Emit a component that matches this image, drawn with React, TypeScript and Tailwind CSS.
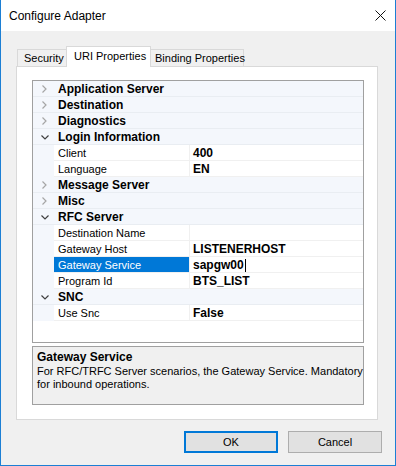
import React from 'react';

type Row =
  | { kind: 'cat'; label: string; open: boolean }
  | { kind: 'prop'; label: string; value: string; selected?: boolean };

const rows: Row[] = [
  { kind: 'cat', label: 'Application Server', open: false },
  { kind: 'cat', label: 'Destination', open: false },
  { kind: 'cat', label: 'Diagnostics', open: false },
  { kind: 'cat', label: 'Login Information', open: true },
  { kind: 'prop', label: 'Client', value: '400' },
  { kind: 'prop', label: 'Language', value: 'EN' },
  { kind: 'cat', label: 'Message Server', open: false },
  { kind: 'cat', label: 'Misc', open: false },
  { kind: 'cat', label: 'RFC Server', open: true },
  { kind: 'prop', label: 'Destination Name', value: '' },
  { kind: 'prop', label: 'Gateway Host', value: 'LISTENERHOST' },
  { kind: 'prop', label: 'Gateway Service', value: 'sapgw00', selected: true },
  { kind: 'prop', label: 'Program Id', value: 'BTS_LIST' },
  { kind: 'cat', label: 'SNC', open: true },
  { kind: 'prop', label: 'Use Snc', value: 'False' },
];

const Chevron = ({ open }: { open: boolean }) =>
  open ? (
    <svg width="8" height="5" viewBox="0 0 8 5" className="block">
      <path d="M0.5 0.5 L4 4 L7.5 0.5" fill="none" stroke="#404040" strokeWidth="1.2" />
    </svg>
  ) : (
    <svg width="5" height="8" viewBox="0 0 5 8" className="block">
      <path d="M0.5 0.5 L4 4 L0.5 7.5" fill="none" stroke="#a6a6a6" strokeWidth="1.2" />
    </svg>
  );

const GridRow = ({ row }: { row: Row }) => {
  if (row.kind === 'cat') {
    return (
      <div className="flex h-[16px] bg-[#f4f7fc] border-b border-[#e9edf2]">
        <div className="w-[21px] flex items-center justify-center pl-[2px] pt-[1px]">
          <Chevron open={row.open} />
        </div>
        <div className="pl-[4px] pt-[1px] text-[12px] leading-[15px] font-bold whitespace-nowrap">{row.label}</div>
      </div>
    );
  }
  return (
    <div className="flex h-[16px]">
      <div className="w-[21px] bg-[#f4f7fc]" />
      <div className="flex flex-1 border-b border-[#f0f0f0]">
        <div
          className={
            row.selected
              ? 'w-[136px] border-r border-[#f0f0f0] bg-[#0078d7] text-white pl-[4px] pt-[1px] text-[11px] leading-[14px] whitespace-nowrap'
              : 'w-[136px] border-r border-[#f0f0f0] pl-[4px] pt-[1px] text-[11px] leading-[14px] whitespace-nowrap'
          }
        >
          {row.label}
        </div>
        <div className="flex items-center pl-[3px] pt-[1px] text-[12px] leading-[14px] font-bold">
          {row.value}
          {row.selected && <span className="ml-[1px] w-[1px] h-[13px] bg-black" />}
        </div>
      </div>
    </div>
  );
};

export default function App() {
  return (
    <div className="w-[396px] h-[466px] flex flex-col bg-[#f0f0f0] border-x border-b border-[#1c7fd4] text-black font-['Liberation_Sans',Arial,sans-serif]">
      <div className="h-[31px] bg-white flex items-center justify-between pl-[8px] pr-[9px]">
        <span className="text-[12px]">Configure Adapter</span>
        <svg width="11" height="11" viewBox="0 0 11 11">
          <path d="M0.5 0.5 L10.5 10.5 M10.5 0.5 L0.5 10.5" stroke="#111" strokeWidth="1" />
        </svg>
      </div>

      <div className="pl-[15px] pt-[15px]">
        <div className="flex items-end h-[20px] text-[11px] whitespace-nowrap">
          <div className="ml-[1px] w-[49px] h-[17px] border-l border-t border-[#d9d9d9] pl-[6px] leading-[17px]">
            Security
          </div>
          <div className="relative z-10 -mb-[1px] w-[85px] h-[21px] bg-white border-x border-t border-[#d9d9d9] pl-[7px] leading-[19px]">
            URI Properties
          </div>
          <div className="w-[93px] h-[17px] border-r border-t border-[#d9d9d9] pl-[4px] leading-[17px]">
            Binding Properties
          </div>
        </div>

        <div className="w-[362px] h-[354px] bg-white border border-[#d9d9d9] pl-[15px] pt-[13px] flex flex-col gap-[3px]">
          <div className="w-[332px] h-[263px] border border-[#a0a0a0] bg-white">
            {rows.map((r) => (
              <GridRow key={r.label} row={r} />
            ))}
          </div>
          <div className="w-[332px] h-[59px] border border-[#a0a0a0] bg-[#f0f0f0] pl-[4px] pt-[2px]">
            <div className="text-[12px] font-bold leading-[16px]">Gateway Service</div>
            <div className="text-[11px] leading-[13px]">
              For RFC/TRFC Server scenarios, the Gateway Service. Mandatory for inbound operations.
            </div>
          </div>
        </div>
      </div>

      <div className="flex justify-end gap-[10px] pr-[13px] mt-[11px] text-[11px]">
        <button className="w-[94px] h-[22px] bg-[#e1e1e1] border-2 border-[#0078d7]">OK</button>
        <button className="w-[94px] h-[22px] bg-[#e1e1e1] border border-[#adadad]">Cancel</button>
      </div>
    </div>
  );
}
